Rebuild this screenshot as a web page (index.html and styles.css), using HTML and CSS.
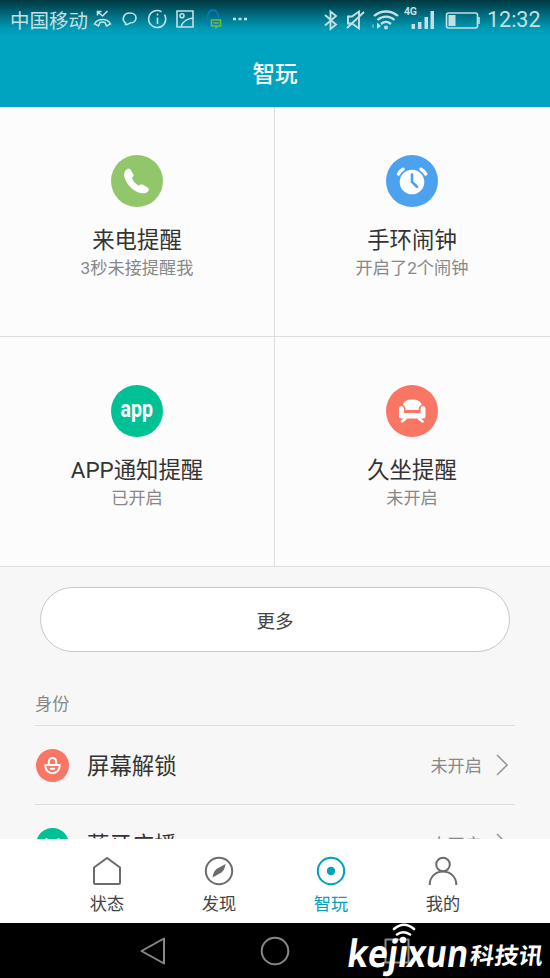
FILE: index.html
```html
<!DOCTYPE html>
<html lang="zh-CN">
<head>
<meta charset="utf-8">
<title>智玩</title>
<link rel="stylesheet" href="styles.css">
</head>
<body>
<div class="screen">
  <header class="header">
    <div class="status">
      <span class="carrier">中国移动</span>
      <svg class="notices" width="160" height="24" viewBox="90 8 160 24">
        <path d="M97.500 11.500l5 4.500 5-5M97.500 15.500v-4h4"/>
        <path d="M94.500 24c3-6 13-6 16 0l-4 2-1.500-3.500c-1-.7-4-.7-5 0L98.500 26z"/>
        <path d="M125.500 23c-4-3-2.500-10 4.500-10 8 0 8 10 0 10-1.500 1.300-3 1.800-4.500 1.500z"/>
        <path d="M161.500 11.700a8.500 8.500 0 1 0 3 3M157.500 17.500V24M157.500 13.500v2"/>
        <path d="M177 11h16v16h-16zM181 27c1-5 5-8 12-9"/><circle cx="182" cy="15.700" r="2"/>
        <path class="qq" d="M218.500 18c0-10.500-11-10.500-11 0l-2.500 6 3-1 2 4"/>
        <path class="chat" d="M211.500 20h9v6H218l-2 1.500V26h-4.500zM213.500 23h5"/>
        <path class="dots" d="M233 19h3M238.500 19h3M244 19h3"/>
      </svg>
      <svg class="signals" width="164" height="30" viewBox="320 4 164 30">
        <path class="bold" d="M325 14l11 9.500-5.500 4.500V10.500L336 15l-11 9.500"/>
        <path class="bold" d="M348 15.500h4l7-5v17l-7-5h-4zM347 27l17-16"/>
        <path class="wifi" d="M374 15c7-6 17-6 24 0M377.500 19c5-4.500 12-4.500 17 0M381 23c3-2.500 7-2.500 10 0"/>
        <circle class="solid" cx="386" cy="26.500" r="2"/>
        <path class="solid" d="M377 21.500v6.500l4-3z"/><path class="solid faint" d="M371 25l3-2.500v5z"/>
        <text x="404" y="14" textLength="13">4G</text>
        <path class="solid" d="M411.500 23h3.500v5h-3.500zM418 21h3.500v7H418zM424.500 16h3.500v12h-3.500zM430.500 10h3.500v18h-3.500z"/>
        <rect x="446.500" y="12" width="31" height="15" rx="2"/><path d="M479 16v7"/>
        <path class="solid" d="M448.500 14h7v11h-7z"/>
      </svg>
      <span class="time">12:32</span>
    </div>
    <h1 class="title">智玩</h1>
  </header>

  <main class="content">
    <section class="grid">
      <div class="card">
        <svg class="badge" viewBox="0 0 52 52"><circle class="green" cx="26" cy="26" r="26"/><path class="white" d="M14.500 15.500c1.500-2 3.500-2.500 5-1l3 5c.5 1.200-.2 2-1.500 3.200 1.200 4 3.500 6.300 7 8 1.500-1.500 2.500-2 4-1l5 3c1.500 1.200.8 2.800-.3 4-3.200 3-9 1.500-13.500-1.500-6.500-4.500-10.500-12-10-17z"/></svg>
        <h2>来电提醒</h2><p>3秒未接提醒我</p>
      </div>
      <div class="card">
        <svg class="badge" viewBox="0 0 52 52"><circle class="blue" cx="26" cy="26" r="26"/><circle class="white" cx="26" cy="27" r="12.300"/><path class="line thick" d="M12.500 19c1-2 2.500-3.700 4.500-4.700M35 14.300c2 1 3.700 2.700 4.700 4.700"/><path class="hands" d="M26 19.500v7.500l5 4.800"/></svg>
        <h2>手环闹钟</h2><p>开启了2个闹钟</p>
      </div>
      <div class="card">
        <svg class="badge" viewBox="0 0 52 52"><circle class="mint" cx="26" cy="26" r="26"/><text class="app" x="9.500" y="32" textLength="32.500" lengthAdjust="spacingAndGlyphs">app</text></svg>
        <h2>APP通知提醒</h2><p>已开启</p>
      </div>
      <div class="card">
        <svg class="badge" viewBox="0 0 52 52"><circle class="coral" cx="26" cy="26" r="26"/><path class="white" d="M16.800 20c1-3.500 4-5.500 9.500-5.500s8.500 2 9.500 5.500c-2 .5-3 2-3 3.500V25H19.500v-1.500c0-1.500-.7-3-2.700-3.500z"/><path class="white" d="M13 24c0-4 5-4 5 0v4h16.500v-4c0-4 5-4 5 0v7.500c0 1.200-1 2-2.500 2H15.500c-1.500 0-2.500-.8-2.500-2z"/><path class="line legs" d="M19.500 33.500L16 36.500M33 33.500l3.500 3"/></svg>
        <h2>久坐提醒</h2><p>未开启</p>
      </div>
    </section>

    <button class="more">更多</button>

    <section class="list">
      <h3>身份</h3>
      <div class="row">
        <svg class="mini" viewBox="0 0 33 33"><circle class="coral" cx="16.500" cy="16.500" r="16.500"/><path class="line" d="M12.800 16v-2.800c0-5.500 7.400-5.500 7.400 0V16M9.300 16h14.400v1a7.200 7.200 0 0 1-14.400 0zM14.800 19.800h3.400"/></svg>
        <span class="name">屏幕解锁</span><span class="state">未开启</span>
        <svg class="arrow" viewBox="0 0 12 22"><path d="M1 1l10 10L1 21"/></svg>
      </div>
      <div class="row">
        <svg class="mini" viewBox="0 0 33 33"><circle class="mint" cx="16.500" cy="16.500" r="16.500"/><path class="line" d="M10.500 11l4 6h4l4-6"/></svg>
        <span class="name">蓝牙广播</span><span class="state">未开启</span>
        <svg class="arrow" viewBox="0 0 12 22"><path d="M1 1l10 10L1 21"/></svg>
      </div>
    </section>
  </main>

  <nav class="tabs">
    <div class="tab"><svg viewBox="0 0 30 30"><path d="M2 11.500L15 2l13 9.500V27q0 1-1 1H3q-1 0-1-1z"/></svg><span>状态</span></div>
    <div class="tab"><svg viewBox="0 0 30 30"><circle cx="15" cy="15" r="13.200"/><path class="needle" d="M8.500 21.500c.5-4 2-7 4-8.500l9-5c-.5 4-2 7-4 8.500z"/></svg><span>发现</span></div>
    <div class="tab active"><svg viewBox="0 0 30 30"><circle cx="15" cy="15" r="13.200"/><circle class="dot" cx="15" cy="15" r="4.200"/></svg><span>智玩</span></div>
    <div class="tab"><svg viewBox="0 0 30 30"><circle cx="15" cy="8.500" r="6.800"/><path d="M1.700 29c0-18 26.600-18 26.600 0"/></svg><span>我的</span></div>
  </nav>

  <footer class="keys">
    <svg width="26" height="30" viewBox="0 0 26 30"><path d="M1.500 15L24 2.500v25z"/></svg>
    <svg width="30" height="30" viewBox="0 0 30 30"><circle cx="15" cy="15" r="13.300"/></svg>
    <svg width="26" height="30" viewBox="0 0 26 30"><path d="M1.500 3.500h23v23h-23z"/></svg>
  </footer>
  <svg class="brand" viewBox="0 0 206 56">
    <g transform="translate(6 0) skewX(-8)">
      <text class="latin" x="2" y="45" textLength="61" lengthAdjust="spacingAndGlyphs">kejı</text>
      <text class="latin" x="62" y="45" textLength="61" lengthAdjust="spacingAndGlyphs">xun</text>
      <text class="cjk" x="125" y="42" textLength="73" lengthAdjust="spacingAndGlyphs">科技讯</text>
    </g>
    <circle cx="59" cy="18" r="3.200"/>
    <path d="M53 12.500q6-4.500 13 0M50 7q10-8.500 20 0"/>
  </svg>
</div>
</body>
</html>
```
FILE: styles.css
```css
* { box-sizing: border-box; }
body, h1, h2, h3, p { margin: 0; font-weight: 400; }
body { font-family: Roboto, "Noto Sans CJK SC", sans-serif; color: #333; }
svg { display: block; flex: none; fill: none; }

.screen {
  position: relative;
  width: 550px;
  height: 978px;
  display: flex;
  flex-direction: column;
  overflow: hidden;
  background: #f7f7f7;
}

.header {
  flex: none;
  height: 107px;
  background: linear-gradient(#003a43 0, #004c58 6px, #007487 17px, #0098b2 28px, #00a4c1 36px);
}
.status { height: 39px; display: flex; align-items: center; color: #c4e0e5; }
.status svg { stroke: currentColor; stroke-width: 1.6; }
.carrier { width: 80px; margin-left: 10px; font-size: 19.5px; white-space: nowrap; }
.signals { margin-left: 70px; }
.signals text { fill: currentColor; stroke: none; font-size: 10.5px; font-weight: 700; }
.signals .solid { fill: currentColor; stroke: none; }
.signals .faint { opacity: .4; }
.signals .bold { stroke-width: 1.9; }
.signals .wifi { stroke-width: 2.3; }
.notices .qq { stroke: #0878c9; }
.notices .chat { stroke: #72b84b; }
.notices .dots { stroke-width: 2.5; }
.time { margin-left: 3px; font-size: 21.5px; }
.title { height: 68px; line-height: 70px; text-align: center; font-size: 22.5px; color: #fff; font-weight: 500; }

.content { flex: 1; min-height: 0; overflow: hidden; }
.grid { display: grid; grid-template-columns: 275px 275px; grid-auto-rows: 230px; background: #fcfcfc; }
.card {
  display: flex;
  flex-direction: column;
  align-items: center;
  padding-top: 48px;
  border-bottom: 1px solid #ddd;
}
.card:nth-child(odd) { border-right: 1px solid #ddd; }
.card:nth-child(even) { padding-right: 1px; }
.badge { width: 52px; height: 52px; }
.card h2 { margin-top: 17px; font-size: 22.4px; line-height: 33px; }
.card p { margin-top: -2px; font-size: 17.2px; line-height: 26px; color: #888; }

.green { fill: #92c66b; }
.blue { fill: #4da2f0; }
.mint { fill: #00c193; }
.coral { fill: #fa7664; }
.white { fill: #fff; }
.line { stroke: #fff; stroke-width: 2; stroke-linecap: round; stroke-linejoin: round; }
.thick { stroke-width: 3.5; }
.legs { stroke-width: 2.6; }
.hands { stroke: #4da2f0; stroke-width: 2.7; stroke-linecap: round; }
.app { fill: #fff; font: 700 24px Roboto, sans-serif; }

.more {
  display: block;
  width: 470px;
  height: 65px;
  margin: 20px 0 0 40px;
  padding: 0;
  border: 1px solid #c8c8c8;
  border-radius: 33px;
  background: #fff;
  font: 400 18.5px "Noto Sans CJK SC", sans-serif;
  color: #444;
}
.list { margin: 38px 35px 0; }
.list h3 { height: 36px; border-bottom: 1px solid #ddd; font-size: 17.2px; line-height: 29px; color: #888; }
.row { display: flex; align-items: center; height: 79px; border-bottom: 1px solid #ddd; padding: 0 7px 0 1px; }
.mini { width: 33px; height: 33px; }
.name { margin: -2px 0 0 18px; font-size: 22.4px; }
.state { margin: -1px 0 0 auto; font-size: 17.2px; color: #888; }
.arrow { width: 12px; height: 22px; margin-left: 14px; stroke: #999; stroke-width: 1.6; }

.tabs {
  flex: none;
  height: 84px;
  display: flex;
  padding: 0 51px;
  background: #fff;
}
.tab { flex: 1; display: flex; flex-direction: column; align-items: center; padding-top: 17px; font-size: 17.2px; line-height: 26px; color: #444; }
.tab svg { width: 30px; height: 30px; margin-bottom: 5px; stroke: #6c6c6c; stroke-width: 2; }
.tab .needle { fill: #6c6c6c; stroke: none; }
.active { color: #00a0be; }
.active svg { stroke: #00a0be; }
.active .dot { fill: #00a0be; stroke: none; }

.keys { flex: none; height: 55px; display: flex; justify-content: center; align-items: center; gap: 94px; background: #000; }
.keys svg { stroke: #888; stroke-width: 2; stroke-linejoin: round; }

.brand { position: absolute; left: 344px; top: 922px; width: 206px; height: 56px; }
.brand text, .brand circle { fill: #fff; }
.brand path { stroke: #fff; stroke-width: 2.6; stroke-linecap: round; }
.latin { font: 700 38px "Open Sans", sans-serif; }
.cjk { font: 700 23px "Noto Sans CJK SC", sans-serif; }
```
